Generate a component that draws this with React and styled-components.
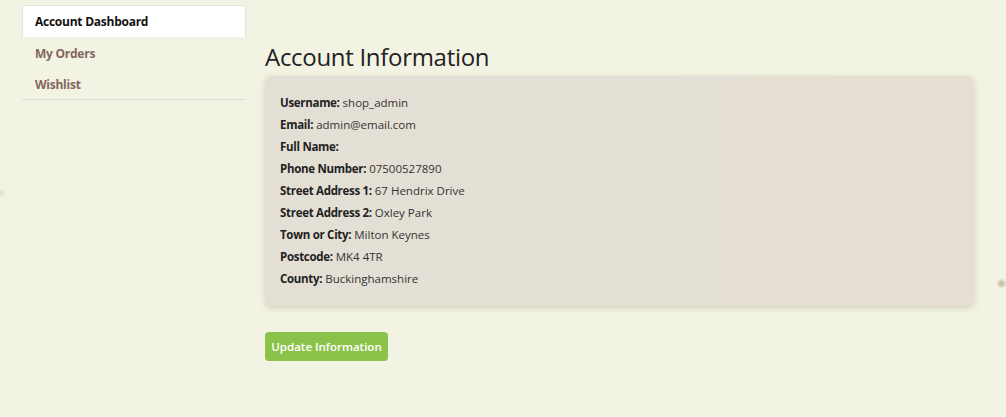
import React from "react";
import styled, { createGlobalStyle } from "styled-components";

const Global = createGlobalStyle`
  *, *::before, *::after { box-sizing: border-box; }
  html, body { margin: 0; padding: 0; }
  body {
    background: #f2f3e2;
    font-family: "Open Sans", "Noto Sans", sans-serif;
    color: #212529;
    min-height: 417px;
  }
`;

const Page = styled.div`
  position: relative;
  display: grid;
  grid-template-columns: 224px 709px;
  column-gap: 19px;
  padding: 5px 0 0 22px;
  min-height: 417px;
  overflow: hidden;
`;

const Nav = styled.nav`
  display: flex;
  flex-direction: column;
  align-self: start;
  border-bottom: 1px solid #dddcd4;
`;

const Tab = styled.a`
  display: flex;
  align-items: center;
  height: ${(p) => (p.$active ? "32px" : "31px")};
  padding: 0 12px;
  font-size: 12px;
  font-weight: 700;
  letter-spacing: -0.25px;
  text-decoration: none;
  color: ${(p) => (p.$active ? "#111" : "#83665d")};
  background: ${(p) => (p.$active ? "#fff" : "transparent")};
  border: 1px solid ${(p) => (p.$active ? "#e3e4dc" : "transparent")};
  border-bottom: none;
  border-radius: 4px 4px 0 0;
`;

const Main = styled.main`
  display: flex;
  flex-direction: column;
  padding-top: 35px;
`;

const Heading = styled.h2`
  margin: 0 0 2px;
  font-size: 24px;
  font-weight: 500;
  line-height: 34px;
  color: #222;
  letter-spacing: -0.3px;
`;

const Card = styled.section`
  background: linear-gradient(90deg, #e3dfd4 0%, #e5e0d5 60%, #e6ded3 100%);
  border-radius: 6px;
  box-shadow: 0 2px 6px rgba(120, 110, 80, 0.25);
  padding: 16px 15px;
`;

const Row = styled.p`
  margin: 0;
  font-size: 11.5px;
  line-height: 22px;
  color: #333;
`;

const Label = styled.strong`
  font-weight: 700;
  letter-spacing: -0.3px;
  color: #222;
`;

const Button = styled.button`
  align-self: flex-start;
  margin-top: 26px;
  height: 29px;
  width: 123px;
  padding: 0;
  border: none;
  border-radius: 4px;
  background: #8bc34a;
  color: #fff;
  font-family: inherit;
  font-size: 11.5px;
  font-weight: 600;
  cursor: pointer;
`;

const Dot = styled.span`
  position: absolute;
  left: ${(p) => p.$x}px;
  top: ${(p) => p.$y}px;
  width: ${(p) => p.$s}px;
  height: ${(p) => p.$s}px;
  border-radius: 50%;
  background: ${(p) => p.$c};
  filter: blur(1px);
`;

const rows = [
  ["Username:", "shop_admin"],
  ["Email:", "admin@email.com"],
  ["Full Name:", ""],
  ["Phone Number:", "07500527890"],
  ["Street Address 1:", "67 Hendrix Drive"],
  ["Street Address 2:", "Oxley Park"],
  ["Town or City:", "Milton Keynes"],
  ["Postcode:", "MK4 4TR"],
  ["County:", "Buckinghamshire"],
];

export default function App() {
  return (
    <>
      <Global />
      <Page>
        <Nav>
          <Tab $active href="#">Account Dashboard</Tab>
          <Tab href="#">My Orders</Tab>
          <Tab href="#">Wishlist</Tab>
        </Nav>
        <Main>
          <Heading>Account Information</Heading>
          <Card>
            {rows.map(([l, v]) => (
              <Row key={l}>
                <Label>{l}</Label> {v}
              </Row>
            ))}
          </Card>
          <Button>Update Information</Button>
        </Main>
        <Dot $x={998} $y={280} $s={7} $c="#c9bfa8" />
        <Dot $x={-2} $y={190} $s={6} $c="#dfe3c8" />
      </Page>
    </>
  );
}
